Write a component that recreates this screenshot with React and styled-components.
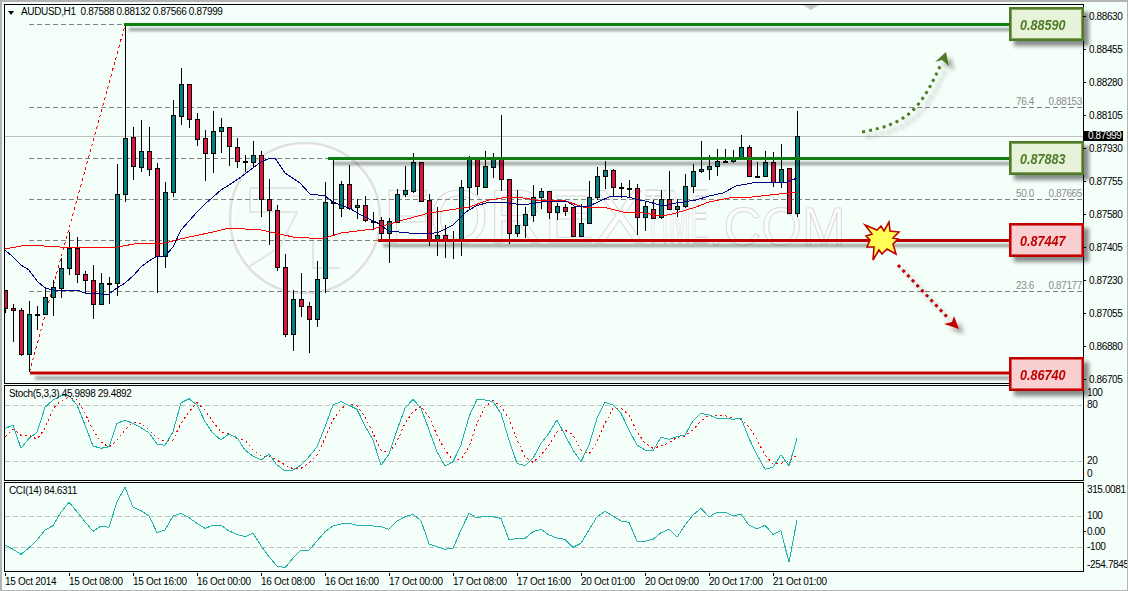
import React from "react";
import styled, { createGlobalStyle } from "styled-components";

const GlobalStyle = createGlobalStyle`
  html, body { margin: 0; padding: 0; background: #f5fffa; }
  body { font-family: "Liberation Sans", Arial, sans-serif; }
`;

/* [high, bodyTop, bodyBottom, low, kind] in chart pixels; kind: b teal, r crimson, d doji */
const CANDLES = [
  [290,290,308,313,"r"],[304,308,310,342,"r"],[308,310,354,356,"r"],[301,314,354,372,"b"],[306,314,314,330,"d"],
  [287,297,314,314,"b"],[280,287,297,316,"b"],[258,268,288,298,"b"],[232,248,268,275,"b"],[237,248,274,283,"r"],
  [271,274,280,293,"r"],[265,280,304,319,"r"],[273,283,304,305,"b"],[277,283,283,304,"d"],[164,194,283,296,"b"],
  [25,138,194,202,"b"],[127,137,166,180,"r"],[120,151,167,172,"b"],[127,151,169,176,"r"],[163,168,256,293,"r"],
  [182,192,256,268,"b"],[100,115,192,197,"b"],[68,84,116,125,"b"],[84,84,119,128,"r"],[113,119,139,146,"r"],
  [130,138,153,181,"r"],[111,131,153,173,"b"],[118,127,131,153,"b"],[127,127,146,166,"r"],[138,147,161,168,"r"],
  [155,161,161,172,"d"],[141,155,162,168,"b"],[151,155,199,217,"r"],[179,199,210,245,"r"],[205,210,267,271,"r"],
  [254,267,334,337,"r"],[290,299,334,351,"b"],[273,299,306,317,"r"],[302,306,319,353,"r"],[261,279,319,327,"b"],
  [182,202,278,293,"b"],[158,202,202,235,"d"],[181,184,208,217,"b"],[165,184,208,210,"r"],[199,205,207,219,"b"],
  [196,205,220,222,"r"],[212,221,221,230,"d"],[217,220,233,239,"r"],[218,221,233,263,"b"],[189,194,222,223,"b"],
  [166,190,194,197,"b"],[153,162,191,193,"b"],[162,162,201,201,"r"],[194,200,239,246,"r"],[207,235,239,256,"b"],
  [225,235,240,258,"r"],[231,240,240,259,"d"],[180,187,240,256,"b"],[156,158,187,210,"b"],[157,158,186,195,"r"],
  [151,166,187,187,"b"],[153,158,167,178,"b"],[115,158,179,191,"r"],[179,179,233,244,"r"],[190,225,233,237,"b"],
  [207,214,225,238,"b"],[185,197,215,222,"b"],[188,191,197,209,"b"],[191,191,212,219,"r"],[203,206,212,220,"b"],
  [204,207,211,216,"r"],[207,207,236,236,"r"],[204,223,236,237,"b"],[181,197,223,223,"b"],[167,176,197,200,"b"],
  [161,170,176,189,"b"],[169,170,187,197,"r"],[183,187,187,198,"d"],[180,188,188,198,"d"],[184,188,217,235,"r"],
  [202,206,217,231,"b"],[200,209,218,218,"r"],[190,199,217,219,"b"],[171,199,209,210,"r"],[199,206,209,217,"b"],
  [174,186,206,208,"b"],[164,171,186,193,"b"],[141,169,171,173,"b"],[155,166,169,180,"b"],[149,161,166,176,"b"],
  [149,161,162,163,"d"],[150,157,161,163,"b"],[135,147,157,157,"b"],[145,147,176,176,"r"],[162,176,176,176,"d"],
  [151,162,176,176,"b"],[152,162,182,187,"r"],[144,169,182,188,"b"],[168,168,213,213,"r"],[111,136,213,217,"b"],
];

const z = (list, base) => list.map((v, i) => `${5 + 8 * i},${(base + v / 3).toFixed(1)}`).join(" ");

const STOCH_MAIN = [145,136,205,175,157,82,60,47,47,75,135,198,205,200,130,121,130,143,158,192,196,155,68,56,75,125,160,180,162,173,210,228,240,223,255,273,270,255,230,200,140,75,65,76,88,138,180,256,222,150,85,58,
  85,150,215,258,245,195,110,58,60,65,100,180,250,257,235,190,160,120,165,210,245,195,115,67,75,100,150,195,210,212,172,178,170,165,122,100,105,115,115,118,115,175,225,268,262,224,258,175];
const STOCH_SIGNAL = [170,147,166,166,178,145,85,62,52,60,100,150,186,202,180,150,127,130,150,175,184,180,130,95,68,90,125,155,162,175,180,210,228,228,240,255,266,265,250,225,175,120,85,72,78,110,160,210,218,185,130,95,
  78,110,165,210,240,238,200,130,80,62,80,115,180,230,247,225,195,155,150,165,210,222,185,130,85,85,105,155,190,205,198,188,172,168,150,122,105,107,107,115,118,140,180,225,252,250,245,225];
const CCI = [495,508,523,503,480,450,437,397,367,395,425,454,438,442,365,322,382,392,408,458,450,408,400,413,430,445,436,436,453,463,470,460,497,530,558,563,535,510,511,483,455,438,432,430,436,436,438,440,448,423,410,403,
  422,492,500,508,505,450,400,414,408,410,415,480,475,475,455,448,465,474,478,502,490,450,410,394,408,423,427,484,484,478,458,448,472,435,405,385,411,397,397,407,403,435,447,436,463,452,547,420];

const BLUE_MA = "5,250 13,257 21,265 29,270 37,281 45,288 53,290 77,290 85,293 101,294 109,294 117,288 125,283 133,276 141,267 149,261 157,256 165,256 173,247 181,230 189,221 197,212 205,204 213,197 221,190 229,185 241,177 253,168 261,162 270,158 275,158 285,173 300,183 310,194 325,196 333,202 349,208 361,215 373,221 376,222 389,231 409,233 429,234 439,232 453,225 466,212 476,206 489,202 509,203 523,205 536,203 549,201 566,201 576,207 589,206 609,197 623,196 636,199 649,202 663,206 676,203 696,200 709,196 723,193 736,186 752,183 770,182 787,182 797,178";
const RED_MA = "5,249 27,245 60,247 105,247 117,247 140,243 165,243 180,239 213,232 229,228 245,229 261,230 293,237 309,238 325,238 341,233 373,229 376,228 396,222 429,213 443,211 469,207 489,200 509,197 523,198 543,201 563,200 583,207 603,207 623,212 643,213 663,216 676,213 696,207 709,202 729,198 752,197 770,195 797,192";

const PRICES = ["0.88630","0.88455","0.88280","0.88105","0.87930","0.87755","0.87580","0.87405","0.87230","0.87055","0.86880","0.86705"];
const TIMES = ["15 Oct 2014","15 Oct 08:00","15 Oct 16:00","16 Oct 00:00","16 Oct 08:00","16 Oct 16:00","17 Oct 00:00","17 Oct 08:00","17 Oct 16:00","20 Oct 01:00","20 Oct 09:00","20 Oct 17:00","21 Oct 01:00"];
const STOCH_AXIS = [["100", 1], ["80", 1], ["20", 45], ["0", 2]];
const CCI_AXIS = [["315.0081", 0, false], ["100", 15, false], ["0.00", 5, true], ["-100", 4, false], ["-254.7845", 7, false]];

const Frame = styled.div`
  box-sizing: border-box;
  width: 1128px;
  height: 591px;
  overflow: hidden;
  background: #f5fffa;
  border: 2px solid #b4b4b4;
  border-bottom-width: 1px;
  border-right-width: 1px;
  padding: 2px 0 0 2px;
  display: flex;
  flex-direction: column;
  gap: 1px;
`;

const Row = styled.div`
  display: flex;
  height: ${(p) => p.$h}px;
  position: relative;
  z-index: ${(p) => p.$z || 0};
`;

const Plot = styled.div`
  box-sizing: border-box;
  position: relative;
  width: 1080px;
  height: 100%;
  border: 1px solid #000;
  svg { display: block; }
`;

const Axis = styled.div`
  display: flex;
  flex-direction: column;
  padding-top: ${(p) => p.$top}px;
  gap: ${(p) => p.$gap || 0}px;
  margin-left: -1px;
`;

const AxisLabel = styled.div`
  position: relative;
  height: 11px;
  line-height: 11px;
  padding-left: ${(p) => p.$indent}px;
  margin-top: ${(p) => p.$mt || 0}px;
  font-size: 10px;
  letter-spacing: -0.38px;
  color: #000;
  white-space: nowrap;
  &::before {
    content: "";
    position: absolute;
    left: 0;
    top: 5px;
    width: 3px;
    height: 1px;
    background: ${(p) => (p.$tick ? "#000" : "transparent")};
  }
`;

const PriceTag = styled.div`
  position: absolute;
  left: 1079px;
  top: 127px;
  width: 35px;
  height: 10px;
  line-height: 10px;
  padding-left: 5px;
  background: #000;
  color: #fff;
  font-size: 10px;
  letter-spacing: -0.38px;
  white-space: nowrap;
`;

const SymbolLabel = styled.div`
  position: absolute;
  left: 16px;
  top: 1px;
  font-size: 10px;
  line-height: 12px;
  color: #000;
  white-space: pre;
  letter-spacing: -0.35px;
  &::before {
    content: "";
    position: absolute;
    left: -13px;
    top: 5px;
    border: 3.5px solid transparent;
    border-top: 4px solid #000;
    border-bottom: 0;
  }
`;

const IndicatorLabel = styled.div`
  position: absolute;
  left: 4px;
  top: 2px;
  font-size: 10px;
  line-height: 12px;
  color: #000;
  white-space: pre;
  letter-spacing: -0.35px;
`;

const FibTag = styled.div`
  position: absolute;
  top: ${(p) => p.$top}px;
  right: 1px;
  width: 66px;
  display: flex;
  justify-content: space-between;
  font-size: 10px;
  line-height: 11px;
  letter-spacing: -0.38px;
  color: #8c8c8c;
`;

const ValueBox = styled.div`
  box-sizing: border-box;
  position: absolute;
  right: -1px;
  top: ${(p) => p.$top}px;
  width: 75px;
  height: 34px;
  display: flex;
  align-items: center;
  padding-left: 9px;
  border: 2px solid ${(p) => (p.$tone === "up" ? "#4f7a28" : "#c00000")};
  background: ${(p) => (p.$tone === "up" ? "#e7f3d8" : "#f9d0d1")};
  color: ${(p) => (p.$tone === "up" ? "#4f7a28" : "#c00000")};
  box-shadow: 5px 5px 4px rgba(0, 0, 0, 0.45), inset 0 0 0 1px ${(p) => (p.$tone === "up" ? "#83a35f" : "#dc5a5a")};
  font-weight: bold;
  font-style: italic;
  font-size: 15px;
  span {
    display: inline-block;
    transform: scaleX(0.84);
    transform-origin: left center;
  }
`;

const TimeAxis = styled.div`
  display: flex;
  height: 17px;
  padding-left: 1px;
`;

const TimeCell = styled.div`
  position: relative;
  width: 64px;
  flex: none;
  padding-top: 3px;
  font-size: 10px;
  line-height: 11px;
  letter-spacing: -0.28px;
  white-space: nowrap;
  color: #000;
  &::before {
    content: "";
    position: absolute;
    left: 0;
    top: 0;
    width: 1px;
    height: 3px;
    background: #000;
  }
`;

const Chart = styled.svg`
  position: relative;
`;

const WatermarkWord = styled.text`
  font-family: "Liberation Sans", Arial, sans-serif;
  font-size: ${(p) => p.$size}px;
  fill: #fbfefc;
  stroke: #d8dad8;
  stroke-width: 1;
  vector-effect: non-scaling-stroke;
`;

function Watermark() {
  return (
    <g>
      <g fill="none">
        <circle cx="305" cy="218" r="75" stroke="#dfe1df" strokeWidth="2.5" />
        <circle cx="305" cy="218" r="72" stroke="#ffffff" strokeWidth="2" />
        <path d="M250 188H297M250 188V212H297L280 247L247 268M313 237V268H340" stroke="#e4e6e4" strokeWidth="2" />
      </g>
      <WatermarkWord $size={76} transform="translate(383 243)">FOREX</WatermarkWord>
      <WatermarkWord $size={76} transform="translate(645 243) scale(0.35 1)">TIME</WatermarkWord>
      <WatermarkWord $size={54} transform="translate(709 245) scale(0.97 1)">.COM</WatermarkWord>
    </g>
  );
}

function Candle({ c, i }) {
  const [hi, top, bot, lo, kind] = c;
  const x = 5.5 + 8 * i;
  return (
    <g>
      <line x1={x} x2={x} y1={hi} y2={lo} stroke="#000" />
      {kind === "d" ? (
        <rect x={x - 2.5} y={top} width={5} height={2} fill="#000" />
      ) : (
        <rect x={x - 2} y={top + 0.5} width={4} height={Math.max(bot - top, 1)} fill={kind === "b" ? "#008080" : "#dc143c"} stroke="#000" />
      )}
    </g>
  );
}

function Level({ x, y, color }) {
  return <rect x={x} y={y - 1.5} width={1009 - x} height={3} fill={color} filter="url(#levelShadow)" />;
}

function MainChart() {
  return (
    <Chart width="1078" height="378" viewBox="5 5 1078 378">
      <defs>
        <filter id="levelShadow" x="-5%" y="-400%" width="110%" height="1000%">
          <feDropShadow dx="5" dy="5" stdDeviation="1.8" floodColor="#000" floodOpacity="0.42" />
        </filter>
        <filter id="arrowShadow" x="-30%" y="-30%" width="170%" height="170%">
          <feDropShadow dx="5" dy="5" stdDeviation="2" floodColor="#000" floodOpacity="0.35" />
        </filter>
      </defs>
      <Watermark />
      <g stroke="#808080" strokeDasharray="5 3" shapeRendering="crispEdges">
        <line x1="29" x2="1083" y1="24.5" y2="24.5" />
        <line x1="29" x2="1083" y1="107.5" y2="107.5" />
        <line x1="29" x2="1083" y1="158.5" y2="158.5" />
        <line x1="29" x2="1083" y1="199.5" y2="199.5" />
        <line x1="29" x2="1083" y1="240.5" y2="240.5" />
        <line x1="29" x2="1083" y1="291.5" y2="291.5" />
      </g>
      <line x1="5" x2="1083" y1="136.5" y2="136.5" stroke="#c0c0c0" shapeRendering="crispEdges" />
      <line x1="29.5" y1="372" x2="125" y2="25" stroke="#ff0000" strokeDasharray="3 3" shapeRendering="crispEdges" />
      <polygon points="803,5 819,5 811,10" fill="#c8c8c8" />
      <g shapeRendering="crispEdges">
        {CANDLES.map((c, i) => <Candle key={i} c={c} i={i} />)}
      </g>
      <polyline points={RED_MA} fill="none" stroke="#ff0000" strokeWidth="1" shapeRendering="crispEdges" />
      <polyline points={BLUE_MA} fill="none" stroke="#000080" strokeWidth="1" shapeRendering="crispEdges" />
      <Level x={124} y={24.5} color="#0a7d0a" />
      <Level x={328} y={158.5} color="#0a7d0a" />
      <Level x={378} y={240.5} color="#c00000" />
      <Level x={30} y={373} color="#c00000" />
      <g filter="url(#arrowShadow)">
        <path d="M862 132 C885 128 902 122 915 108 C926 96 934 80 941 64" fill="none" stroke="#4f7a28" strokeWidth="3" strokeDasharray="3 4" />
        <polygon points="946,52 949,66 942,60 935,62" fill="#4f7a28" />
      </g>
      <g filter="url(#arrowShadow)">
        <path d="M898 265 L949 319" fill="none" stroke="#c00000" strokeWidth="3" strokeDasharray="3 3.8" />
        <polygon points="959,329 944,324 952,322 954,316" fill="#c00000" />
      </g>
      <polygon
        points="865,225 877,230 881,226 884,231 889,222 890,231 899,232 893,238 898,239 893,244 896,254 887,249 882,254 879,250 873,260 874,247 867,247 870,240 866,236 872,234"
        fill="#ffff55"
        stroke="#c00000"
        strokeWidth="1.6"
      />
    </Chart>
  );
}

function StochChart() {
  return (
    <Chart width="1078" height="94" viewBox="5 386 1078 94">
      <g stroke="#c0c0c0" strokeDasharray="5 3" shapeRendering="crispEdges">
        <line x1="5" x2="1083" y1="405.5" y2="405.5" />
        <line x1="5" x2="1083" y1="461.5" y2="461.5" />
      </g>
      <polyline points={z(STOCH_SIGNAL, 380)} fill="none" stroke="#ff0000" strokeDasharray="2 3" shapeRendering="crispEdges" />
      <polyline points={z(STOCH_MAIN, 380)} fill="none" stroke="#20b2aa" shapeRendering="crispEdges" />
    </Chart>
  );
}

function CciChart() {
  return (
    <Chart width="1078" height="88" viewBox="5 483 1078 88">
      <g stroke="#c0c0c0" strokeDasharray="5 3" shapeRendering="crispEdges">
        <line x1="5" x2="1083" y1="516.5" y2="516.5" />
        <line x1="5" x2="1083" y1="547.5" y2="547.5" />
      </g>
      <polyline points={z(CCI, 380)} fill="none" stroke="#20b2aa" shapeRendering="crispEdges" />
    </Chart>
  );
}

export default function App() {
  return (
    <Frame>
      <GlobalStyle />
      <Row $h={380} $z={2}>
        <Plot>
          <MainChart />
          <SymbolLabel>{"AUDUSD,H1  0.87588 0.88132 0.87566 0.87999"}</SymbolLabel>
          <FibTag $top={91}><span>76.4</span><span>0.88153</span></FibTag>
          <FibTag $top={183}><span>50.0</span><span>0.87665</span></FibTag>
          <FibTag $top={275}><span>23.6</span><span>0.87177</span></FibTag>
          <ValueBox $tone="up" $top={2}><span>0.88590</span></ValueBox>
          <ValueBox $tone="up" $top={136}><span>0.87883</span></ValueBox>
          <ValueBox $tone="down" $top={218}><span>0.87447</span></ValueBox>
          <ValueBox $tone="down" $top={352}><span>0.86740</span></ValueBox>
        </Plot>
        <Axis $top={7} $gap={22}>
          {PRICES.map((p) => <AxisLabel key={p} $indent={6} $tick>{p}</AxisLabel>)}
        </Axis>
        <PriceTag>0.87999</PriceTag>
      </Row>
      <Row $h={96} $z={1}>
        <Plot>
          <StochChart />
          <IndicatorLabel>{"Stoch(5,3,3) 45.9898 29.4892"}</IndicatorLabel>
        </Plot>
        <Axis $top={1}>
          {STOCH_AXIS.map(([t, m]) => <AxisLabel key={t} $indent={4} $mt={m}>{t}</AxisLabel>)}
        </Axis>
      </Row>
      <Row $h={90}>
        <Plot>
          <CciChart />
          <IndicatorLabel>{"CCI(14) 84.6311"}</IndicatorLabel>
        </Plot>
        <Axis $top={2}>
          {CCI_AXIS.map(([t, m, tick]) => <AxisLabel key={t} $indent={4} $mt={m} $tick={tick}>{t}</AxisLabel>)}
        </Axis>
      </Row>
      <TimeAxis>
        {TIMES.map((t) => <TimeCell key={t}>{t}</TimeCell>)}
      </TimeAxis>
    </Frame>
  );
}
